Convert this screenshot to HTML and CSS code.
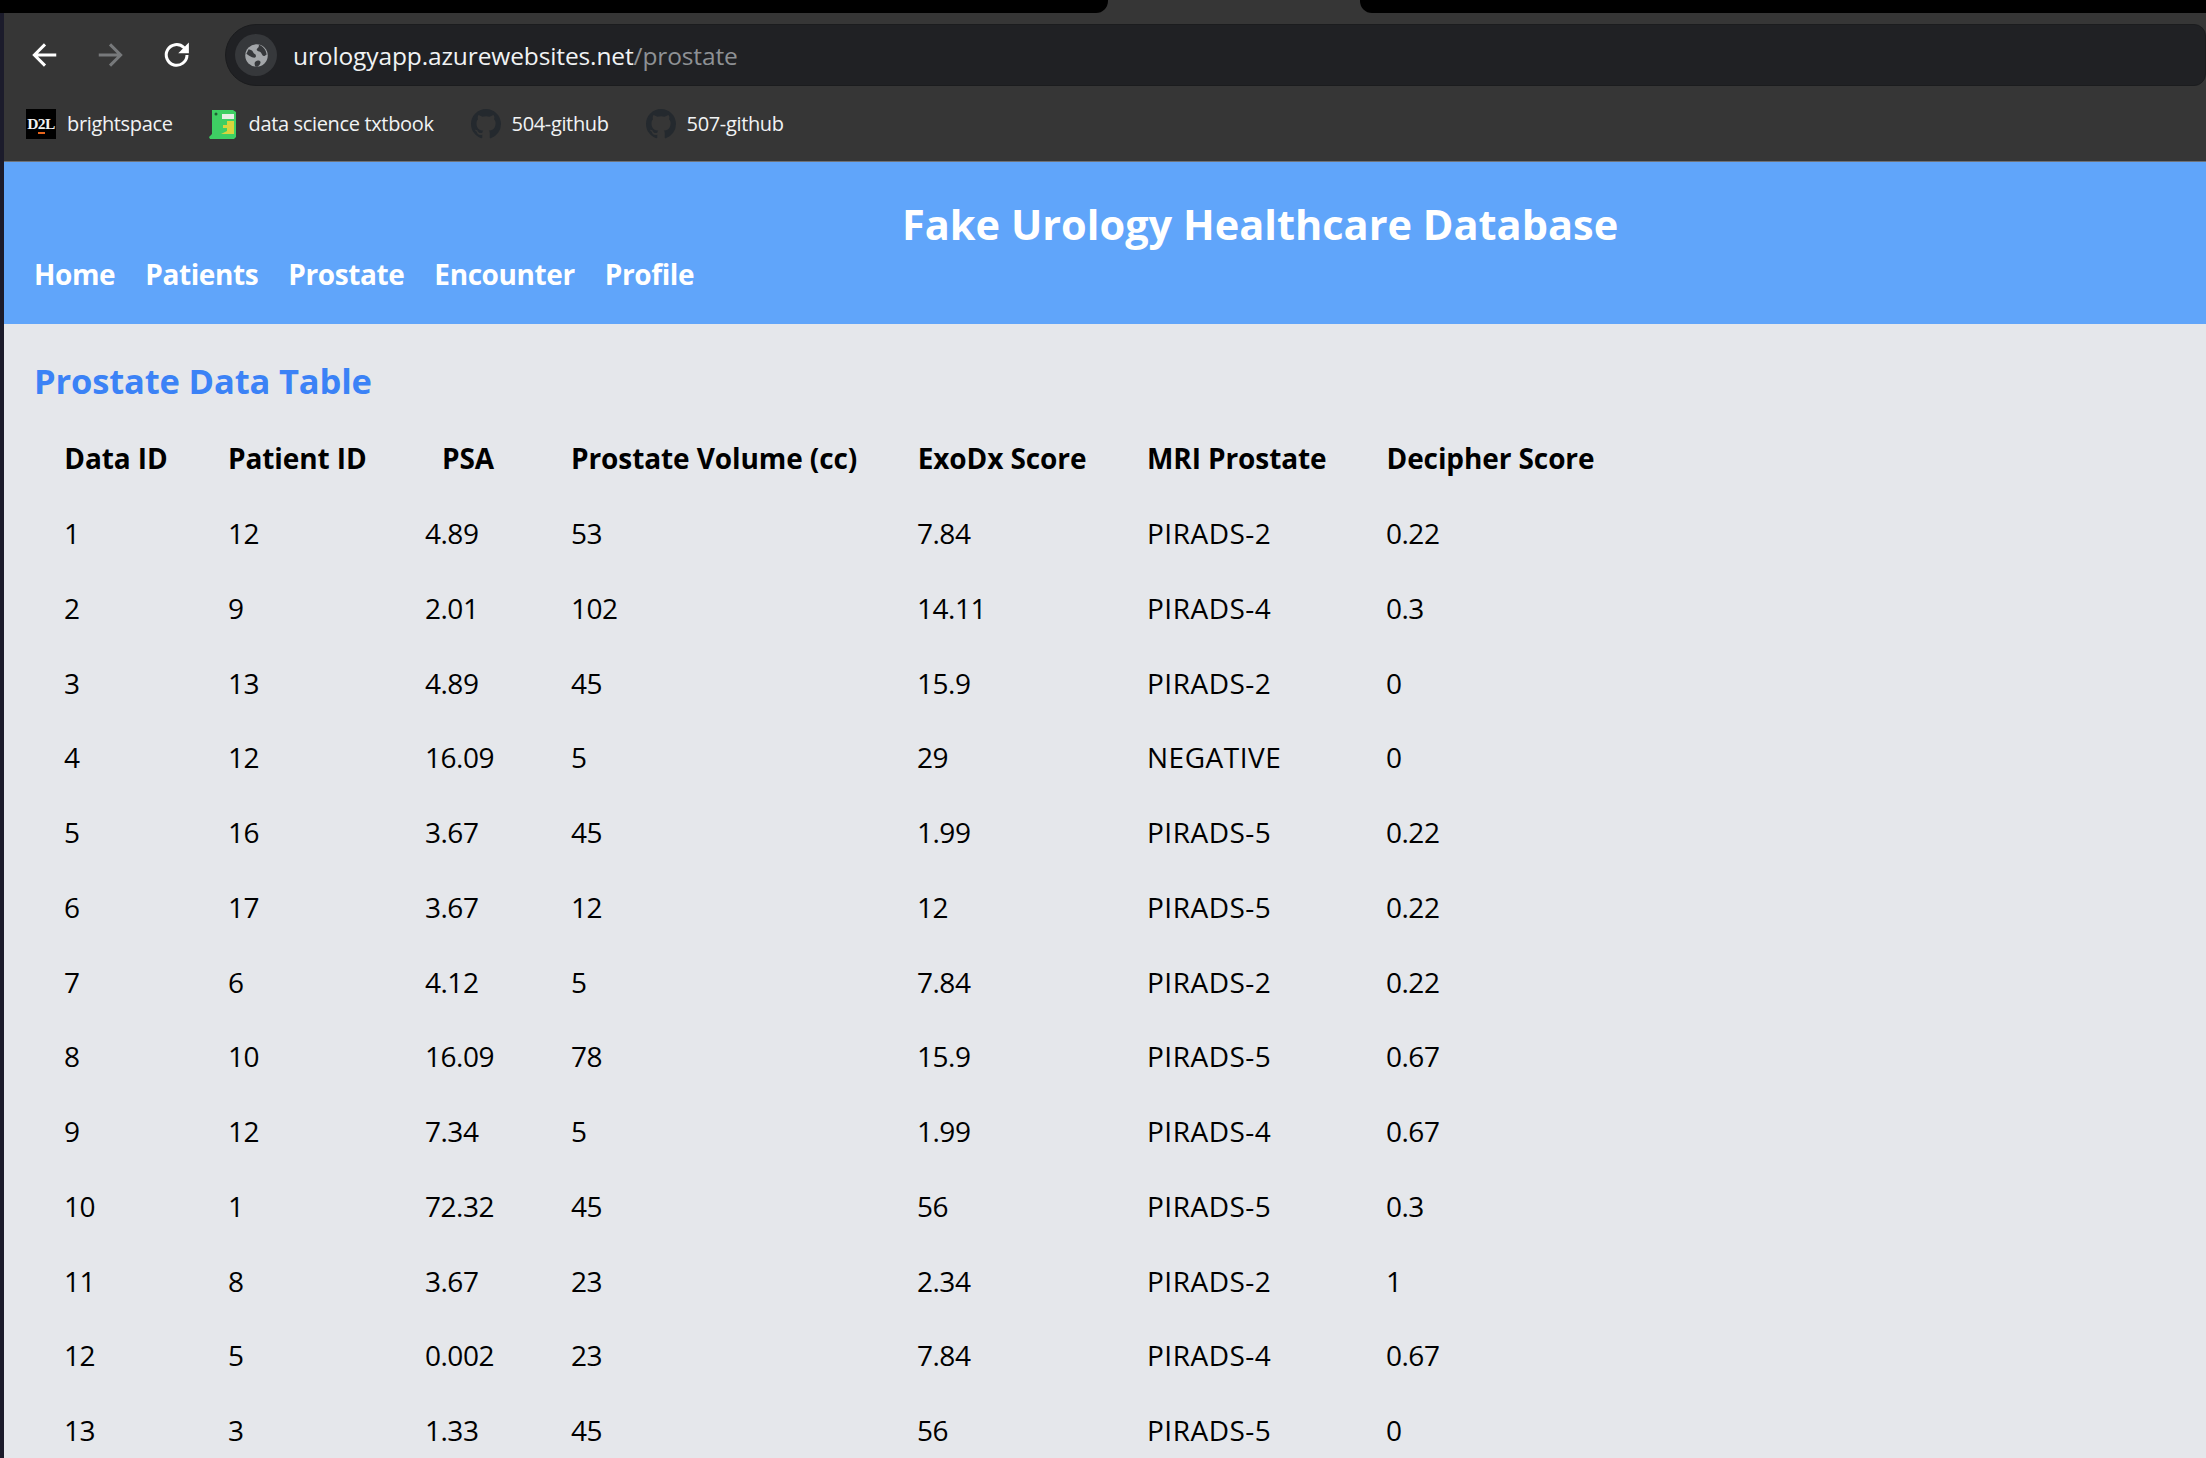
FILE: index.html
```html
<!DOCTYPE html>
<html lang="en">
<head>
<meta charset="utf-8">
<title>Fake Urology Healthcare Database</title>
<link rel="stylesheet" href="styles.css">
</head>
<body>
<div class="tabstrip"><div class="tabgap-left"></div><div class="tabgap"></div><div class="tabgap-right"></div></div>
<div class="browser">
  <div class="chrome">
    <div class="toolbar">
      <svg class="navicon back" viewBox="0 0 24 24"><path d="M21 12H4M12 3.5 3.5 12l8.5 8.5" fill="none" stroke="#fff" stroke-width="2.4"/></svg>
      <svg class="navicon forward" viewBox="0 0 24 24"><path d="M3 12h17M12 3.5l8.500 8.500-8.500 8.500" fill="none" stroke="#77797b" stroke-width="2.4"/></svg>
      <svg class="navicon reload" viewBox="0 0 24 24"><path d="M20 12a8.300 8.300 0 1 1-2.500-6L20 8.500" fill="none" stroke="#fff" stroke-width="2.400"/><path d="M21.500 2v8.500H13z" fill="#fff"/></svg>
      <div class="omnibox">
        <span class="siteicon"><svg viewBox="0 0 24 24"><circle cx="12" cy="12" r="10" fill="#a3a6a9"/><path d="M5 6.500c2 .5 3.500 1 4 2.500s2.500 1.500 2.500 3.500-2 1.500-3.500 1-3.500-2-5-3zM11 22c-1-2.500-1-4 .5-5s3.500-.5 4 .5-1 3.500-2.500 4.500zM14 2.500c.5 1.500-.5 2.500-1.500 3.500s.5 2.500 2 2.500 2 2.500 3 3.500 2.500 0 3.500-1c-.5-4-3.500-7.500-7-8.500z" fill="#36383b"/></svg></span>
        <span class="url">urologyapp.azurewebsites.net<span class="urlpath">/prostate</span></span>
      </div>
    </div>
    <div class="bookmarks">
      <span class="bookmark"><span class="d2l">D<span class="d2l-two">2</span>L</span><span class="bmlabel">brightspace</span></span>
      <span class="bookmark"><svg class="favicon dino" viewBox="0 0 28 30"><path d="M3 1h21l3 2v25l-2 2H1l-1-2 3-3z" fill="#3ecf63"/><path d="M13 5h12v5H13z" fill="#e8efe6"/><path d="M14 12h11v13H12l6-3v-3h-4v-3h4v-4z" fill="#d9d43c"/><circle cx="7" cy="5" r="1.500" fill="#1f5f33"/></svg><span class="bmlabel">data science txtbook</span></span>
      <span class="bookmark"><svg class="favicon gh" viewBox="0 0 16 16"><path fill="#24292e" d="M8 0C3.580 0 0 3.580 0 8c0 3.540 2.290 6.530 5.470 7.590.4.070.55-.17.55-.38 0-.19-.01-.82-.01-1.490-2.010.37-2.530-.49-2.690-.94-.09-.23-.48-.94-.82-1.130-.28-.15-.68-.52-.01-.53.63-.01 1.080.58 1.230.82.72 1.210 1.870.87 2.330.66.070-.52.280-.87.510-1.070-1.780-.2-3.640-.89-3.640-3.950 0-.87.310-1.590.820-2.150-.08-.2-.36-1.020.08-2.120 0 0 .67-.21 2.200.82.640-.18 1.320-.27 2-.27s1.360.09 2 .27c1.530-1.040 2.200-.82 2.200-.82.440 1.100.16 1.920.08 2.120.51.560.82 1.270.82 2.150 0 3.070-1.870 3.750-3.650 3.950.29.250.54.730.54 1.480 0 1.070-.01 1.930-.01 2.200 0 .21.150.46.550.38A8.010 8.010 0 0 0 16 8c0-4.420-3.580-8-8-8z"/></svg><span class="bmlabel">504-github</span></span>
      <span class="bookmark"><svg class="favicon gh" viewBox="0 0 16 16"><path fill="#24292e" d="M8 0C3.580 0 0 3.580 0 8c0 3.540 2.290 6.530 5.470 7.590.4.070.55-.17.55-.38 0-.19-.01-.82-.01-1.490-2.010.37-2.530-.49-2.690-.94-.09-.23-.48-.94-.82-1.130-.28-.15-.68-.52-.01-.53.63-.01 1.080.58 1.230.82.72 1.210 1.870.87 2.330.66.070-.52.280-.87.510-1.070-1.780-.2-3.640-.89-3.640-3.950 0-.87.310-1.590.820-2.150-.08-.2-.36-1.020.08-2.120 0 0 .67-.21 2.200.82.640-.18 1.320-.27 2-.27s1.360.09 2 .27c1.530-1.040 2.200-.82 2.200-.82.440 1.100.16 1.920.08 2.120.51.560.82 1.270.82 2.150 0 3.070-1.870 3.750-3.650 3.950.29.250.54.730.54 1.480 0 1.070-.01 1.930-.01 2.200 0 .21.150.46.550.38A8.010 8.010 0 0 0 16 8c0-4.420-3.580-8-8-8z"/></svg><span class="bmlabel">507-github</span></span>
    </div>
  </div>
  <header class="site-header">
    <h1 class="site-title">Fake Urology Healthcare Database</h1>
    <nav class="site-nav">
      <a class="nav-link">Home</a><a class="nav-link">Patients</a><a class="nav-link">Prostate</a><a class="nav-link">Encounter</a><a class="nav-link">Profile</a>
    </nav>
  </header>
  <main class="content">
    <h2 class="table-title">Prostate Data Table</h2>
    <table class="data-table">
      <colgroup><col class="c1"><col class="c2"><col class="c3"><col class="c4"><col class="c5"><col class="c6"><col class="c7"></colgroup>
      <thead><tr><th>Data ID</th><th>Patient ID</th><th>PSA</th><th>Prostate Volume (cc)</th><th>ExoDx Score</th><th>MRI Prostate</th><th>Decipher Score</th></tr></thead>
      <tbody>
        <tr><td>1</td><td>12</td><td>4.89</td><td>53</td><td>7.84</td><td>PIRADS-2</td><td>0.22</td></tr>
        <tr><td>2</td><td>9</td><td>2.01</td><td>102</td><td>14.11</td><td>PIRADS-4</td><td>0.3</td></tr>
        <tr><td>3</td><td>13</td><td>4.89</td><td>45</td><td>15.9</td><td>PIRADS-2</td><td>0</td></tr>
        <tr><td>4</td><td>12</td><td>16.09</td><td>5</td><td>29</td><td>NEGATIVE</td><td>0</td></tr>
        <tr><td>5</td><td>16</td><td>3.67</td><td>45</td><td>1.99</td><td>PIRADS-5</td><td>0.22</td></tr>
        <tr><td>6</td><td>17</td><td>3.67</td><td>12</td><td>12</td><td>PIRADS-5</td><td>0.22</td></tr>
        <tr><td>7</td><td>6</td><td>4.12</td><td>5</td><td>7.84</td><td>PIRADS-2</td><td>0.22</td></tr>
        <tr><td>8</td><td>10</td><td>16.09</td><td>78</td><td>15.9</td><td>PIRADS-5</td><td>0.67</td></tr>
        <tr><td>9</td><td>12</td><td>7.34</td><td>5</td><td>1.99</td><td>PIRADS-4</td><td>0.67</td></tr>
        <tr><td>10</td><td>1</td><td>72.32</td><td>45</td><td>56</td><td>PIRADS-5</td><td>0.3</td></tr>
        <tr><td>11</td><td>8</td><td>3.67</td><td>23</td><td>2.34</td><td>PIRADS-2</td><td>1</td></tr>
        <tr><td>12</td><td>5</td><td>0.002</td><td>23</td><td>7.84</td><td>PIRADS-4</td><td>0.67</td></tr>
        <tr><td>13</td><td>3</td><td>1.33</td><td>45</td><td>56</td><td>PIRADS-5</td><td>0</td></tr>
      </tbody>
    </table>
  </main>
</div>
</body>
</html>
```
FILE: styles.css
```css
* { box-sizing: border-box; }
html, body { margin: 0; height: 100%; overflow: hidden; }
body { background: #1b1b2b; font-family: "Open Sans", "Noto Sans", sans-serif; display: flex; flex-direction: column; }

.tabstrip { display: flex; height: 13px; background: #363636; flex: none; }
.tabgap-left { width: 1108px; background: #000; border-bottom-right-radius: 12px; }
.tabgap { width: 252px; }
.tabgap-right { flex: 1; background: #000; border-bottom-left-radius: 12px; }

.browser { flex: 1; margin-left: 4px; min-height: 0; display: flex; flex-direction: column; background: #e5e7eb; }

.chrome { height: 149px; background: #363636; border-bottom: 1px solid #6e7278; flex: none; }
.toolbar { height: 73px; padding-top: 11px; display: flex; align-items: flex-start; }
.navicon { width: 30px; height: 30px; margin-top: 16px; flex: none; }
.back { margin-left: 26px; }
.forward { margin-left: 35px; }
.reload { margin-left: 37px; }
.omnibox { margin-left: 33px; flex: 1; height: 62px; background: #202124; border: 1px solid #1b1c1e; border-radius: 31px 12px 12px 31px; display: flex; align-items: center; padding-left: 9px; }
.siteicon { width: 42px; height: 42px; border-radius: 50%; background: #36383b; display: flex; align-items: center; justify-content: center; flex: none; }
.siteicon svg { width: 27px; height: 27px; }
.url { margin-left: 16px; font-size: 24.500px; color: #f1f3f4; letter-spacing: -0.12px; white-space: nowrap; }
.urlpath { color: #8e9195; }

.bookmarks { height: 75px; padding: 0 0 0 22px; display: flex; align-items: center; }
.bookmark { display: flex; align-items: center; flex: none; }
.bookmark:nth-child(2) { margin-left: 35px; }
.bookmark:nth-child(3) { margin-left: 37px; }
.bookmark:nth-child(4) { margin-left: 37px; }
.d2l { width: 30px; height: 30px; background: #000; color: #f2f2f2; font: bold 15.500px/30px "Liberation Serif", serif; text-align: center; letter-spacing: -0.6px; flex: none; }
.d2l-two { border-bottom: 2px solid #e8651c; }
.favicon { width: 30px; height: 30px; flex: none; }
.bmlabel { margin-left: 11px; font-size: 20px; color: #f1f3f4; letter-spacing: -0.35px; white-space: nowrap; }

.site-header { height: 162px; background: #60a5fa; padding: 41px 0 0 30px; flex: none; color: #fff; }
.site-title { margin: 0 0 0 868px; font-size: 41.500px; line-height: 42px; font-weight: 700; white-space: nowrap; }
.site-nav { display: flex; gap: 30px; margin-top: 12px; }
.nav-link { font-size: 28px; line-height: 34px; font-weight: 700; letter-spacing: -0.4px; }

.content { padding: 35px 0 0 30px; }
.table-title { margin: 0; font-size: 34.500px; line-height: 44px; font-weight: 700; color: #3b82f6; letter-spacing: -0.15px; }
.data-table { margin-top: 18px; border-collapse: collapse; table-layout: fixed; width: 1591px; color: #000; font-size: 28px; }
.c1 { width: 164px; } .c2 { width: 197px; } .c3 { width: 146px; } .c4 { width: 346px; } .c5 { width: 230px; } .c6 { width: 239px; } .c7 { width: 269px; }
.data-table tr { height: 74.75px; }
.data-table th, .data-table td { padding: 0 30px; white-space: nowrap; text-align: left; }
.data-table th { font-weight: 700; text-align: center; letter-spacing: -0.1px; }
.data-table td { font-weight: 400; letter-spacing: -0.5px; }
.data-table td:nth-child(6) { letter-spacing: 0.5px; }
```
